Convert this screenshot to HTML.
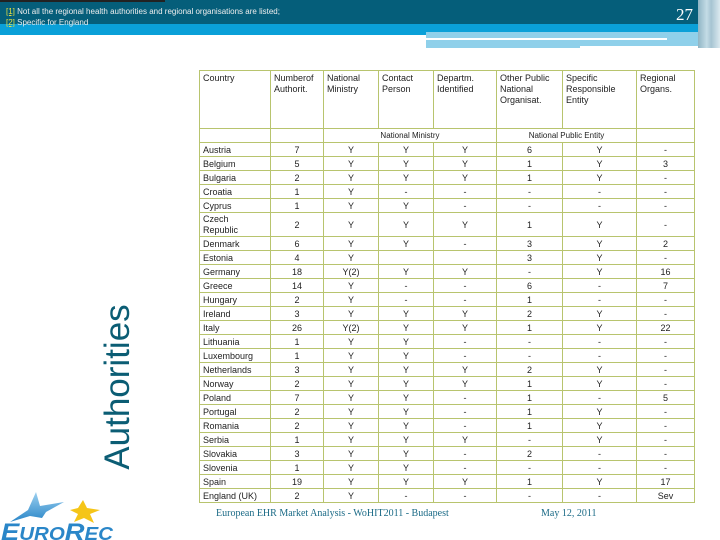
<!DOCTYPE html>
<html><head><meta charset="utf-8"><style>
*{margin:0;padding:0;box-sizing:border-box}
body{width:720px;height:540px;position:relative;overflow:hidden;background:#fff;font-family:"Liberation Sans",sans-serif}
.a{position:absolute}
table{position:absolute;left:199px;top:70px;border-collapse:collapse;table-layout:fixed;font-size:9px;color:#222}
td{border:1px solid #b8c46e;padding:0 3px;height:14px;line-height:12px;text-align:center;white-space:nowrap;overflow:hidden}
td:first-child{text-align:left}
tr.h td{height:58px;vertical-align:top;text-align:left;white-space:normal;line-height:11px;padding-top:2px}
tr.s td{font-size:8px}
</style></head><body>
<div class="a" style="left:0;top:0;width:700px;height:24px;background:#055e7a"></div>
<div class="a" style="left:0;top:0;width:165px;height:2px;background:#222"></div>
<div class="a" style="left:0;top:24px;width:700px;height:11px;background:#0aa0d8"></div>
<div class="a" style="left:426px;top:32px;width:274px;height:16px;background:#8fd0ea"></div>
<div class="a" style="left:426px;top:38px;width:241px;height:2px;background:#fff"></div>
<div class="a" style="left:580px;top:46px;width:120px;height:3px;background:#fff"></div>
<div class="a" style="left:698px;top:0;width:22px;height:48px;background:linear-gradient(90deg,#8fb5c4,#c4dce6 40%,#a6c4d2 60%,#dbe9ef)"></div>
<div class="a" style="left:6px;top:7px;font-size:8px;color:#eee"><span style="color:#e8e040;text-decoration:underline">[1]</span> Not all the regional health authorities and regional organisations are listed;</div>
<div class="a" style="left:6px;top:18px;font-size:8px;color:#eee"><span style="color:#e8e040;text-decoration:underline">[2]</span> Specific for England</div>
<div class="a" style="left:676px;top:5px;font-size:17px;color:#fff;font-family:'Liberation Serif',serif">27</div>
<div class="a" style="left:28px;top:370px;width:180px;height:34px;transform:rotate(-90deg);transform-origin:center;font-size:35px;color:#0b5d74;text-align:center;line-height:34px">Authorities</div>
<table>
<colgroup><col style="width:71px"><col style="width:53px"><col style="width:55px"><col style="width:55px"><col style="width:63px"><col style="width:66px"><col style="width:74px"><col style="width:58px"></colgroup>
<tr class="h"><td>Country</td><td>Numberof Authorit.</td><td>National Ministry</td><td>Contact Person</td><td>Departm. Identified</td><td>Other Public National Organisat.</td><td>Specific Responsible Entity</td><td>Regional Organs.</td></tr>
<tr class="s"><td></td><td></td><td colspan="3">National Ministry</td><td colspan="2">National Public Entity</td><td></td></tr>
<tr><td>Austria</td><td>7</td><td>Y</td><td>Y</td><td>Y</td><td>6</td><td>Y</td><td>-</td></tr>
<tr><td>Belgium</td><td>5</td><td>Y</td><td>Y</td><td>Y</td><td>1</td><td>Y</td><td>3</td></tr>
<tr><td>Bulgaria</td><td>2</td><td>Y</td><td>Y</td><td>Y</td><td>1</td><td>Y</td><td>-</td></tr>
<tr><td>Croatia</td><td>1</td><td>Y</td><td>-</td><td>-</td><td>-</td><td>-</td><td>-</td></tr>
<tr><td>Cyprus</td><td>1</td><td>Y</td><td>Y</td><td>-</td><td>-</td><td>-</td><td>-</td></tr>
<tr><td style="height:24px;line-height:11px">Czech<br>Republic</td><td>2</td><td>Y</td><td>Y</td><td>Y</td><td>1</td><td>Y</td><td>-</td></tr>
<tr><td>Denmark</td><td>6</td><td>Y</td><td>Y</td><td>-</td><td>3</td><td>Y</td><td>2</td></tr>
<tr><td>Estonia</td><td>4</td><td>Y</td><td></td><td></td><td>3</td><td>Y</td><td>-</td></tr>
<tr><td>Germany</td><td>18</td><td>Y(2)</td><td>Y</td><td>Y</td><td>-</td><td>Y</td><td>16</td></tr>
<tr><td>Greece</td><td>14</td><td>Y</td><td>-</td><td>-</td><td>6</td><td>-</td><td>7</td></tr>
<tr><td>Hungary</td><td>2</td><td>Y</td><td>-</td><td>-</td><td>1</td><td>-</td><td>-</td></tr>
<tr><td>Ireland</td><td>3</td><td>Y</td><td>Y</td><td>Y</td><td>2</td><td>Y</td><td>-</td></tr>
<tr><td>Italy</td><td>26</td><td>Y(2)</td><td>Y</td><td>Y</td><td>1</td><td>Y</td><td>22</td></tr>
<tr><td>Lithuania</td><td>1</td><td>Y</td><td>Y</td><td>-</td><td>-</td><td>-</td><td>-</td></tr>
<tr><td>Luxembourg</td><td>1</td><td>Y</td><td>Y</td><td>-</td><td>-</td><td>-</td><td>-</td></tr>
<tr><td>Netherlands</td><td>3</td><td>Y</td><td>Y</td><td>Y</td><td>2</td><td>Y</td><td>-</td></tr>
<tr><td>Norway</td><td>2</td><td>Y</td><td>Y</td><td>Y</td><td>1</td><td>Y</td><td>-</td></tr>
<tr><td>Poland</td><td>7</td><td>Y</td><td>Y</td><td>-</td><td>1</td><td>-</td><td>5</td></tr>
<tr><td>Portugal</td><td>2</td><td>Y</td><td>Y</td><td>-</td><td>1</td><td>Y</td><td>-</td></tr>
<tr><td>Romania</td><td>2</td><td>Y</td><td>Y</td><td>-</td><td>1</td><td>Y</td><td>-</td></tr>
<tr><td>Serbia</td><td>1</td><td>Y</td><td>Y</td><td>Y</td><td>-</td><td>Y</td><td>-</td></tr>
<tr><td>Slovakia</td><td>3</td><td>Y</td><td>Y</td><td>-</td><td>2</td><td>-</td><td>-</td></tr>
<tr><td>Slovenia</td><td>1</td><td>Y</td><td>Y</td><td>-</td><td>-</td><td>-</td><td>-</td></tr>
<tr><td>Spain</td><td>19</td><td>Y</td><td>Y</td><td>Y</td><td>1</td><td>Y</td><td>17</td></tr>
<tr><td>England (UK)</td><td>2</td><td>Y</td><td>-</td><td>-</td><td>-</td><td>-</td><td>Sev</td></tr>
</table>
<div class="a" style="left:216px;top:508px;font-size:10px;color:#1a6a86;font-family:'Liberation Serif',serif">European EHR Market Analysis - WoHIT2011 - Budapest</div>
<div class="a" style="left:541px;top:508px;font-size:10px;color:#1a6a86;font-family:'Liberation Serif',serif">May 12, 2011</div>
<svg class="a" style="left:0;top:488px" width="130" height="52" viewBox="0 0 130 52">
<defs><linearGradient id="g" x1="0" y1="0" x2="0" y2="1"><stop offset="0" stop-color="#9cd0f0"/><stop offset="1" stop-color="#2a86c8"/></linearGradient></defs>
<path d="M10 34 L28 22 L36 4 L40 18 L64 14 L46 24 L42 30 L30 28 Z" fill="url(#g)"/>
<path d="M70 22 L78 20 L83 12 L87 20 L100 22 L90 26 L94 35 L84 30 L74 34 L78 26 Z" fill="#f5c518"/>
<text x="1" y="52" font-family="Liberation Sans,sans-serif" font-weight="bold" font-style="italic" font-size="24" fill="#2a86c8" textLength="112" lengthAdjust="spacingAndGlyphs">E<tspan font-size="18">URO</tspan>R<tspan font-size="18">EC</tspan></text>
</svg>
</body></html>
